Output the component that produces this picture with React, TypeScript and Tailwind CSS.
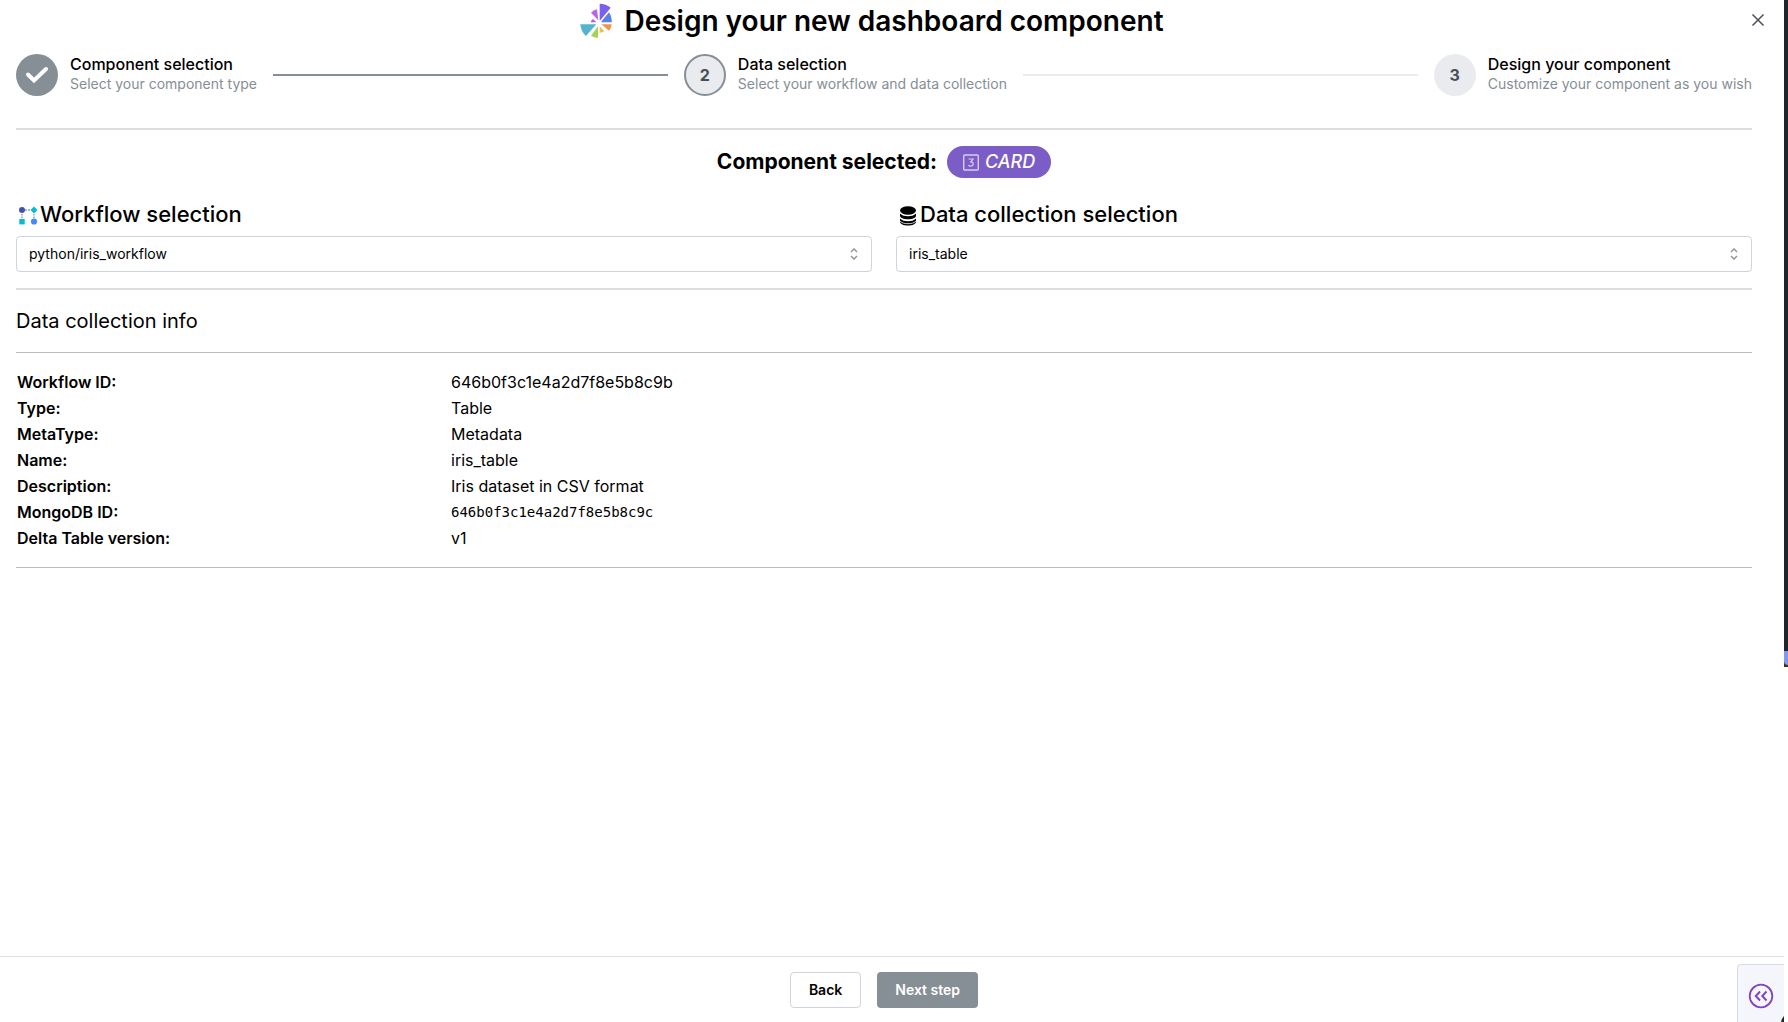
import React from "react";

function Logo() {
  return (
    <svg width="32" height="36" viewBox="40 8 96 108" aria-hidden="true">
      <path d="M99 10C111 10 123 14 132 22L101 60H99Z" fill="#7c5ff0" />
      <path d="M73 37Q80 29 91 27L95 60Z" fill="#bd63e0" />
      <path d="M72 66Q73 60 79 56L89 66Z" fill="#b55be0" />
      <path d="M105 62L127 36Q137 50 135 66H104Z" fill="#5a80ea" />
      <path d="M104 72H135Q134 83 127 91Z" fill="#ef954a" />
      <path d="M99 78L113 93Q107 97 99 97Z" fill="#f2bd4b" />
      <path d="M94 78V113Q82 112 73 106Z" fill="#9ed552" />
      <path d="M41 72H89L58 107Q43 94 41 72Z" fill="#54b4cf" />
    </svg>
  );
}

function WorkflowIcon() {
  return (
    <svg width="20" height="20" viewBox="0 0 20 20" aria-hidden="true">
      <path d="M7 4h6" stroke="#90a4ae" strokeWidth="1.5" strokeDasharray="2 1" />
      <path d="M4 8v4M16 8v4" stroke="#90a4ae" strokeWidth="1.5" strokeDasharray="1.5 1" />
      <circle cx="4" cy="4" r="3" fill="#3f51b5" />
      <path d="M16 .5L19.5 4 16 7.500 12.500 4Z" fill="#00bcd4" />
      <path d="M1.300 13h5.400v5.400H1.300Z" fill="#00bcd4" />
      <circle cx="16" cy="15.500" r="3.100" fill="#448aff" />
    </svg>
  );
}

function DatabaseIcon() {
  return (
    <svg width="20" height="20" viewBox="0 0 20 20" aria-hidden="true">
      <ellipse cx="10" cy="4.500" rx="8" ry="4.200" />
      <path d="M2 7.500C4 9.700 7 10.200 10 10.200s6-.5 8-2.700V9.500C18 12 14.500 13.200 10 13.200S2 12 2 9.500Z" />
      <path d="M2 12.500C4 14.700 7 15.200 10 15.200s6-.5 8-2.700V15.500c0 2.500-3.500 4-8 4s-8-1.500-8-4Z" />
      <path d="M2 15C4 17.200 7 17.700 10 17.700s6-.5 8-2.700" fill="none" stroke="white" strokeWidth="0.800" />
    </svg>
  );
}

type StepProps = { n: number; state: "done" | "current" | "todo"; label: string; description: string };

const circle = {
  done: "bg-[#868e96] text-white",
  current: "border-2 border-[#868e96] bg-[#e9ebef] text-[#495057]",
  todo: "bg-[#e9ebef] text-[#495057]",
};

function Step({ n, state, label, description }: StepProps) {
  return (
    <button type="button" className="flex shrink-0 items-center gap-3 text-left">
      <span className={`flex size-[42px] items-center justify-center rounded-full text-base font-bold ${circle[state]}`}>
        {state === "done" ? (
          <svg width="24" height="18" viewBox="0 0 24 18" fill="none" aria-hidden="true">
            <path d="M3 8.500L9 14.500 21 3" stroke="white" strokeWidth="4" strokeLinecap="round" />
          </svg>
        ) : (
          n
        )}
      </span>
      <span className="flex flex-col pb-0.5">
        <span className="text-base leading-5 font-medium">{label}</span>
        <span className="text-sm leading-5 text-[#868e96]">{description}</span>
      </span>
    </button>
  );
}

function Field({ id, icon, title, value }: { id: string; icon: React.ReactNode; title: string; value: string }) {
  return (
    <div className="flex-1">
      <label htmlFor={id} className="flex items-center text-[22px] leading-8 font-medium">
        <span className="mt-1 w-6 pl-0.5">{icon}</span>
        {title}
      </label>
      <div className="relative mt-1.5">
        <select id={id} className="h-9 w-full appearance-none rounded border border-[#ced4da] bg-white px-3 text-sm">
          <option>{value}</option>
        </select>
        <svg className="pointer-events-none absolute top-2.5 right-2.5" width="16" height="16" viewBox="0 0 16 16" fill="none" stroke="#868e96" aria-hidden="true">
          <path d="M5 6L8 3l3 3M5 10l3 3 3-3" strokeWidth="1.300" />
        </svg>
      </div>
    </div>
  );
}

const info = [
  ["Workflow ID:", "646b0f3c1e4a2d7f8e5b8c9b"],
  ["Type:", "Table"],
  ["MetaType:", "Metadata"],
  ["Name:", "iris_table"],
  ["Description:", "Iris dataset in CSV format"],
  ["MongoDB ID:", "646b0f3c1e4a2d7f8e5b8c9c"],
  ["Delta Table version:", "v1"],
];

export default function App() {
  return (
    <div className="flex min-h-screen items-start bg-white font-['Inter',sans-serif] text-black">
      <div className="flex min-h-screen min-w-0 flex-1 flex-col">
        <header className="flex items-start pr-3">
          <h1 className="flex h-[42px] flex-1 items-center justify-center gap-3 text-[28px] font-semibold">
            <Logo />
            Design your new dashboard component
          </h1>
          <button type="button" aria-label="Close" className="mt-1.5 flex size-7 items-center justify-center">
            <svg width="14" height="14" viewBox="0 0 14 14" stroke="#495057" strokeWidth="1.500" aria-hidden="true">
              <path d="M1.500 1.500l11 11M12.500 1.500l-11 11" />
            </svg>
          </button>
        </header>

        <main className="flex-1 pr-8 pl-4">
          <nav className="mt-3 flex items-center gap-4">
            <Step n={1} state="done" label="Component selection" description="Select your component type" />
            <div className="h-0.5 flex-1 bg-[#868e96]" />
            <Step n={2} state="current" label="Data selection" description="Select your workflow and data collection" />
            <div className="h-0.5 flex-1 bg-[#e9ebef]" />
            <Step n={3} state="todo" label="Design your component" description="Customize your component as you wish" />
          </nav>

          <hr className="mt-8 border-t-2 border-[#dddddd]" />

          <div className="mt-4 flex items-start justify-center gap-2.5">
            <h2 className="text-[21px] leading-8 font-bold">Component selected:</h2>
            <span className="flex h-8 items-center gap-1.5 rounded-full bg-[#7c5cc6] px-4 text-white">
              <svg width="16" height="17" viewBox="0 0 16 17" fill="none" stroke="#d8cdf0" aria-hidden="true">
                <rect x=".7" y="1" width="14.600" height="15" rx="1" strokeWidth="1.400" />
                <path d="M5.500 5h4.500L7.800 7.800c3.400 0 3 4.400 0 4.400-1 0-2-.4-2.300-1.200" strokeWidth="1.200" />
              </svg>
              <span className="text-lg leading-6 font-medium italic">CARD</span>
            </span>
          </div>

          <div className="mt-5 flex gap-6">
            <Field id="workflow" icon={<WorkflowIcon />} title="Workflow selection" value="python/iris_workflow" />
            <Field id="collection" icon={<DatabaseIcon />} title="Data collection selection" value="iris_table" />
          </div>

          <hr className="mt-4 border-t-2 border-[#dddddd]" />
          <h3 className="mt-4 text-xl leading-[30px]">Data collection info</h3>
          <hr className="mt-4 border-[#bbbbbb]" />

          <table className="mt-4 w-full text-base leading-6">
            <tbody>
              {info.map(([k, v]) => (
                <tr key={k}>
                  <th scope="row" className="w-1/4 p-px text-left font-semibold">{k}</th>
                  <td className={k === "MongoDB ID:" ? "p-px font-['DejaVu_Sans_Mono',monospace] text-sm" : "p-px"}>{v}</td>
                </tr>
              ))}
            </tbody>
          </table>
          <hr className="mt-4 border-[#bbbbbb]" />
        </main>

        <footer className="relative flex h-[66px] items-center justify-center gap-4 border-t border-[#dee2e6] pr-8 pl-4 text-sm font-semibold">
          <button type="button" className="h-9 rounded border border-[#ced4da] px-[18px]">Back</button>
          <button type="button" className="h-9 rounded bg-[#868e96] px-[18px] text-white">Next step</button>
          <button type="button" aria-label="Expand panel" className="absolute right-0 bottom-0 flex h-[58px] w-[47px] items-center justify-center overflow-hidden rounded-tl border-t border-l border-[#d9dbea] bg-[#f5f6fb] pt-1">
            <svg width="26" height="26" viewBox="0 0 26 26" fill="none" stroke="#7f45c4" strokeWidth="1.800" aria-hidden="true">
              <circle cx="13" cy="13" r="11.300" />
              <path d="M12 8.500L7.800 13 12 17.500M18.500 8.500L14.300 13l4.200 4.500" strokeWidth="2" />
            </svg>
            <svg className="absolute right-0 bottom-0" width="3" height="6" viewBox="0 0 3 6" fill="#1c2430" aria-hidden="true">
              <path d="M3 0V6H0Q1 2 3 0Z" />
            </svg>
          </button>
        </footer>
      </div>

      <aside className="flex h-[667px] w-1 flex-col bg-[#20242f]">
        <div className="mt-auto bg-[#4a2c10]">
          <div className="h-3.5 rounded-bl bg-[#809af0]" />
        </div>
        <div className="h-0.5 bg-[#4a2c10]" />
      </aside>
    </div>
  );
}
